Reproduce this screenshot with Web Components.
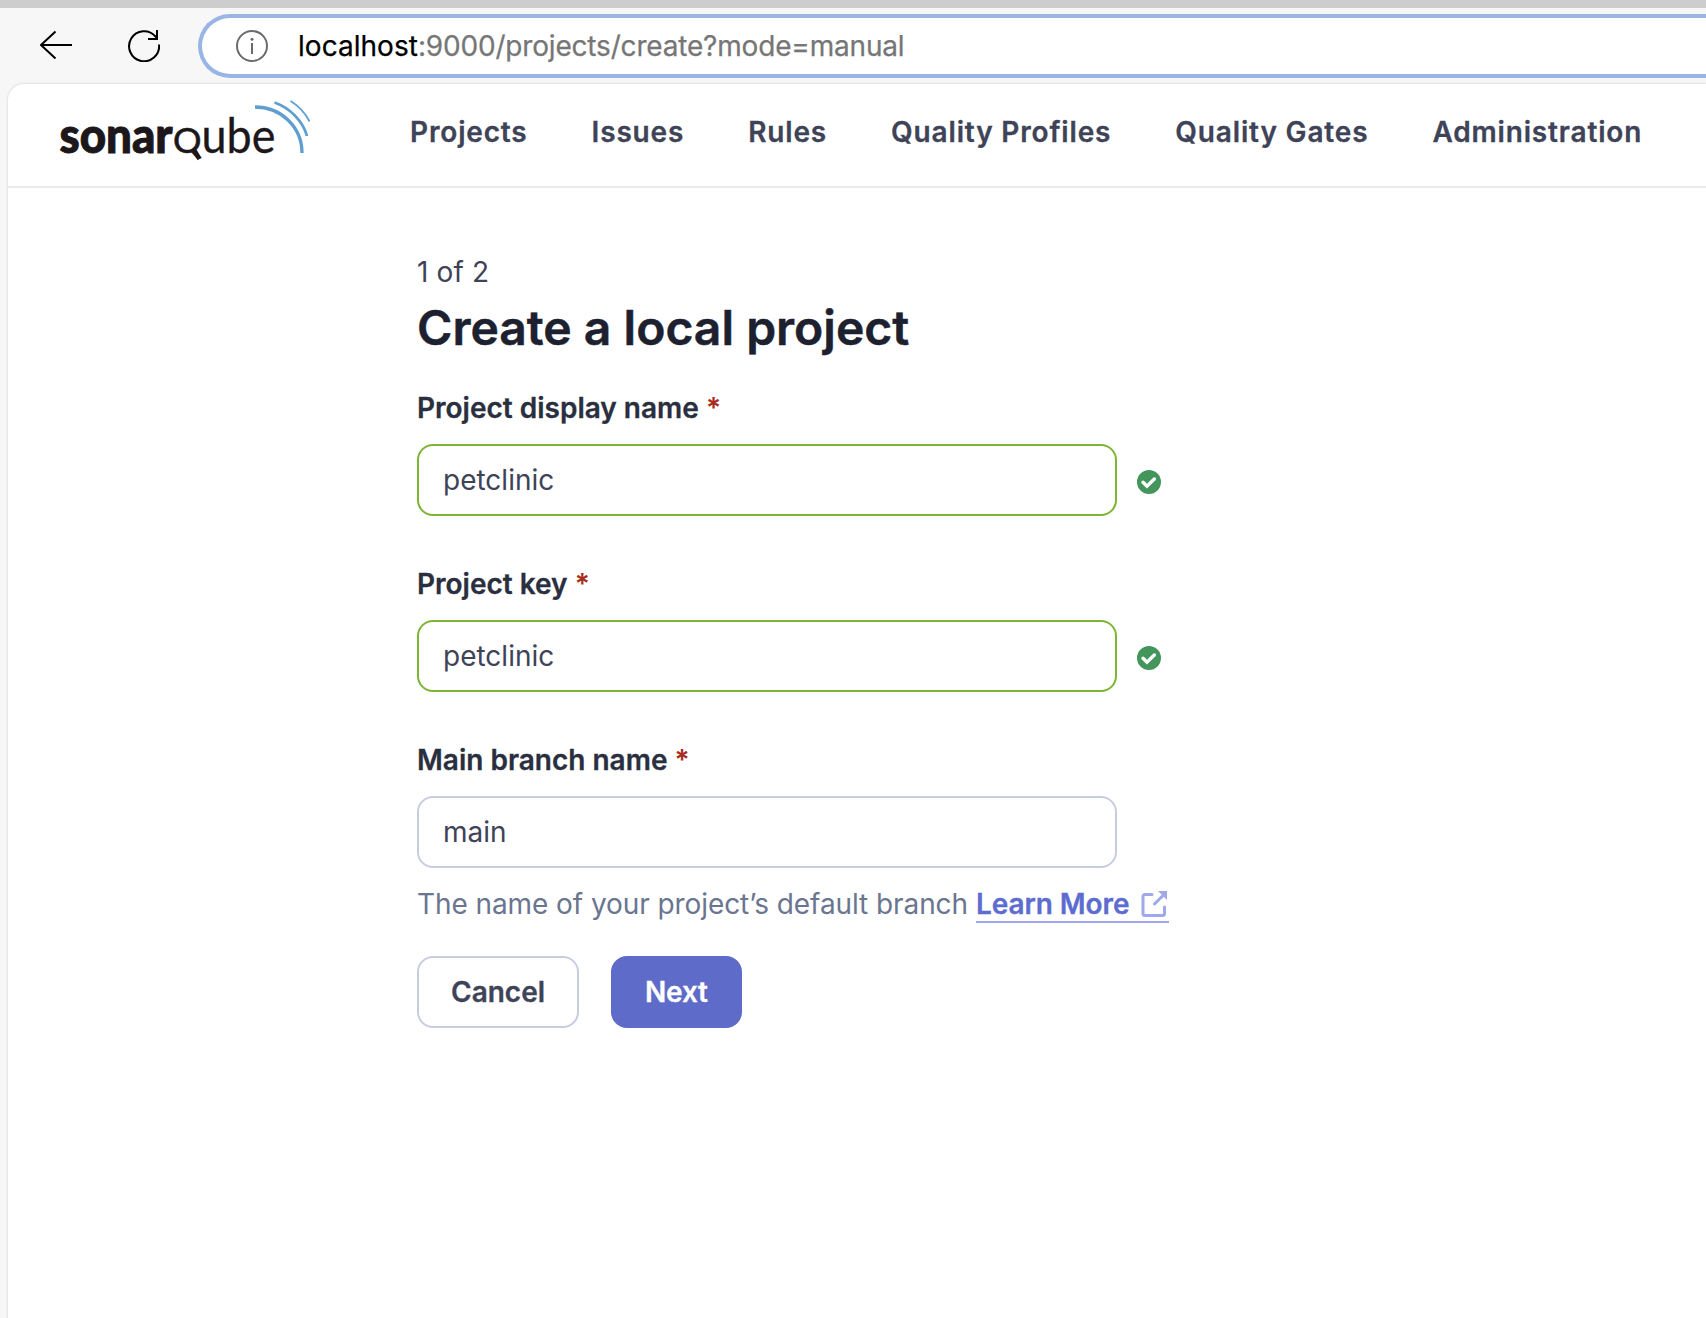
<!DOCTYPE html>
<html lang="en">
<head>
<meta charset="utf-8">
<title>Create a local project</title>
<style>
html,body{margin:0;height:100%;overflow:hidden;background:#f7f7f7;font-family:Inter,"Noto Sans",sans-serif}
</style>
</head>
<body>
<app-shell></app-shell>
<script>
const define=(name,html,init)=>customElements.define(name,class extends HTMLElement{
  connectedCallback(){
    if(this.shadowRoot)return;
    const root=this.attachShadow({mode:'open'});
    root.innerHTML=html;
    if(init)init.call(this,root);
  }
});

define('browser-bar',`
<style>
:host{display:flex;align-items:flex-start;box-sizing:border-box;height:84px;border-top:8px solid #cdcdcd;background:#f7f7f7;padding:6px 0 0 40px}
svg{display:block;flex:none}
.back{margin:16px 56px 0 0}
.reload{margin:16px 38px 0 0}
.url{flex:1;display:flex;align-items:center;box-sizing:border-box;height:64px;border:4px solid #98b5e6;border-right:0;border-radius:32px 0 0 32px;background:#fff;padding-left:34px;font-size:28px;line-height:34px;color:#767676;white-space:nowrap}
.url svg{margin-right:30px}
.addr{letter-spacing:-.18px;-webkit-text-stroke:.25px}
b{font-weight:400;color:#000;letter-spacing:.03px}
</style>
<svg class="back" width="32" height="30" viewBox="0 0 32 30" fill="none" stroke="#000" stroke-width="2" stroke-linejoin="round"><path d="M32 15H1M15.500 1.500 1 15l14.500 13.500"/></svg>
<svg class="reload" width="32" height="32" viewBox="0 0 32 32" fill="none" stroke="#000" stroke-width="2"><path d="M31 14.500A15 15 0 1 1 27.500 6.500L29.500 9M29 0v9H20"/></svg>
<div class="url">
<svg width="32" height="32" viewBox="0 0 32 32"><circle cx="16" cy="16" r="15" fill="none" stroke="#6b6b6b" stroke-width="2"/><path d="M16 13v11" stroke="#6b6b6b" stroke-width="2"/><circle cx="16" cy="9.300" r="1.500" fill="#6b6b6b"/></svg>
<span class="addr"><b>localhost</b>:9000/projects/create?mode=manual</span>
</div>`);

define('brand-logo',`
<style>:host{display:block;flex:none}svg{display:block}text{font-family:Lato,"Noto Sans",sans-serif;fill:#1b171b;stroke:#1b171b;stroke-width:.3}</style>
<svg width="254" height="76" viewBox="58 98 254 76">
<text x="59.500" y="153" font-size="49" font-weight="900" textLength="113" lengthAdjust="spacingAndGlyphs" style="stroke-width:1">sonar</text>
<text x="173" y="153" font-size="35" textLength="28.500" lengthAdjust="spacingAndGlyphs" style="stroke-width:.6">Q</text>
<text x="201.500" y="153" font-size="47.500" textLength="74" lengthAdjust="spacingAndGlyphs">ube</text>
<path d="m193.500 149 6 10" stroke="#1b171b" stroke-width="4.500" fill="none"/>
<g fill="none" stroke="#5f9fd0"><path d="M255 107C281 107 302 127 302 153" stroke-width="3.300"/><path d="M274.500 102.500C290 108 303 121 307 136" stroke-width="2.700"/><path d="M290.500 101C298 105.500 305 112.500 309.500 121.500" stroke-width="1.800"/></g>
</svg>`);

define('nav-link',`
<style>:host{display:block;font-weight:600;font-size:28px;line-height:40px;letter-spacing:.84px;color:#3e4357;white-space:nowrap;-webkit-text-stroke:.3px}</style><slot></slot>`);

define('top-nav',`
<style>
:host{display:flex;align-items:flex-start;box-sizing:border-box;height:104px;border-bottom:2px solid #ebebeb;padding:14px 0 0 50px}
nav{display:flex;gap:64px;margin:14px 0 0 98px}
</style>
<brand-logo></brand-logo>
<nav><slot></slot></nav>`);

define('form-field',`
<style>
:host{display:block;margin-bottom:48px}
label{display:block;font-weight:600;font-size:28px;line-height:40px;color:#2a2f40;margin-bottom:16px}
label span{-webkit-text-stroke:.3px}
i{font-style:normal;font-weight:600;color:#a92c20}
.row{display:flex;align-items:center;gap:20px}
input{box-sizing:border-box;width:700px;height:72px;border:2px solid #c5cddf;border-radius:16px;background:#fff;padding:0 24px;font:400 28px/40px Inter,sans-serif;color:#3e4357;outline:0;margin:0}
:host([valid]) input{border-color:#7db533}
svg{display:none;margin-top:4px}
:host([valid]) svg{display:block}
</style>
<label><span></span> <i>*</i></label>
<div class="row"><input type="text" spellcheck="false">
<svg width="24" height="24" viewBox="0 0 24 24"><circle cx="12" cy="12" r="12" fill="#43955c"/><path d="M6 12.200 10 16.200 17.300 9" fill="none" stroke="#fff" stroke-width="3.400" stroke-linecap="round"/></svg></div>
<slot></slot>`,function(root){
  root.querySelector('span').textContent=this.getAttribute('label');
  root.querySelector('input').value=this.getAttribute('value');
});

define('help-text',`
<style>
:host{display:flex;align-items:flex-start;height:40px;margin-top:16px;font-size:28px;line-height:40px;letter-spacing:-.08px;color:#6a7590;white-space:pre}
a{display:flex;font-weight:600;color:#5d6cd0;border-bottom:2px solid #9fa8ea;height:39px;box-sizing:border-box;margin-left:8px;-webkit-text-stroke:.3px}
svg{margin:7px 1px 0 12px}
</style>
<slot></slot><a>Learn More<svg width="27" height="27" viewBox="0 0 27 27" fill="none" stroke="#9fa8ea" stroke-width="3"><path d="M11 3.500H4A2 2 0 0 0 2 5.500V22.500A2 2 0 0 0 4 24.500H21.500A2 2 0 0 0 23.500 22.500V16" stroke-linecap="round"/><path d="M13.500 13 22 4.500" stroke-linecap="round"/><path d="M17 0h9v9z" fill="#9fa8ea" stroke="none"/></svg></a>`);

define('push-button',`
<style>
:host{display:block}
button{display:block;box-sizing:border-box;height:72px;border:2px solid #c5cddf;border-radius:16px;background:#fff;padding:0 32px;margin:0;font:600 28px/40px Inter,sans-serif;color:#3e4357;-webkit-text-stroke:.3px}
:host([primary]) button{background:#5f6bc8;border-color:#5f6bc8;color:#fff;letter-spacing:-.2px}
</style><button><slot></slot></button>`);

define('project-form',`
<style>
:host{display:block;padding:64px 0 0 409px}
.step{font-size:28px;line-height:40px;letter-spacing:.15px;color:#3e4357}
h1{margin:4px 0 28px;font-weight:600;font-size:48px;line-height:64px;letter-spacing:.02px;color:#1d212f;-webkit-text-stroke:.5px}
.actions{display:flex;gap:32px}
form-field:last-of-type{margin-bottom:32px}
</style>
<div class="step">1 of 2</div>
<h1>Create a local project</h1>
<form-field label="Project display name" value="petclinic" valid></form-field>
<form-field label="Project key" value="petclinic" valid></form-field>
<form-field label="Main branch name" value="main"><help-text>The name of your project’s default branch</help-text></form-field>
<div class="actions"><push-button>Cancel</push-button><push-button primary>Next</push-button></div>`);

define('app-shell',`
<style>
:host{display:flex;flex-direction:column;height:100vh}
main{flex:1;margin-left:8px;background:#fff;border-radius:16px 0 0 0;box-shadow:0 0 2px 1px #e2e2e2}
</style>
<browser-bar></browser-bar>
<main><top-nav><nav-link>Projects</nav-link><nav-link>Issues</nav-link><nav-link>Rules</nav-link><nav-link>Quality Profiles</nav-link><nav-link>Quality Gates</nav-link><nav-link>Administration</nav-link></top-nav>
<project-form></project-form></main>`);
</script>
</body>
</html>
